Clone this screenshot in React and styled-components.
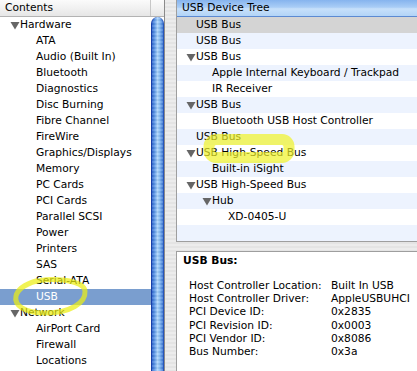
import React from 'react'
import styled, { createGlobalStyle } from 'styled-components'

const ROW_HEIGHT = 16
const FONT = `"DejaVu Sans", "Lucida Grande", Verdana, sans-serif`

const GlobalStyle = createGlobalStyle`
  html, body {
    margin: 0;
    padding: 0;
  }
  body {
    font-family: ${FONT};
    font-size: 10.7px;
    color: #000;
    overflow: hidden;
  }
`

const Window = styled.div`
  position: relative;
  display: flex;
  width: 417px;
  height: 371px;
  overflow: hidden;
  background: repeating-linear-gradient(to bottom, #ececec 0 2px, #e4e4e4 2px 4px);
`

const LeftPane = styled.div`
  display: flex;
  flex-direction: column;
  width: 164px;
  background: #fff;
`

const HeaderBar = styled.div`
  display: flex;
  height: 16px;
  border-bottom: 1px solid #b3b3b3;
  background: linear-gradient(to bottom, #fbfbfb, #f1f1f1 50%, #e6e6e6);
`

const HeaderCell = styled.div`
  width: ${p => p.$width}px;
  padding-left: 5px;
  line-height: 16px;
  border-right: 1px solid #c7c7c7;
  box-sizing: border-box;
`

const Body = styled.div`
  display: flex;
  flex: 1;
  min-height: 0;
`

const List = styled.div`
  width: 151px;
  background: #fff;
  overflow: hidden;
`

const Row = styled.div`
  display: flex;
  align-items: center;
  height: ${ROW_HEIGHT}px;
  padding-left: ${p => p.$indent}px;
  line-height: ${ROW_HEIGHT}px;
  white-space: nowrap;
  background: ${p => p.$bg || 'transparent'};
  color: ${p => (p.$selected ? '#fff' : '#000')};
`

const Toggle = styled.svg`
  width: 10px;
  height: 9px;
  flex: none;
`

const Scrollbar = styled.div`
  width: 13px;
  background: #fff;
  overflow: hidden;
`

const Thumb = styled.div`
  height: 100%;
  border-radius: 7px 7px 0 0;
  box-sizing: border-box;
  border-left: 1px solid #173fa8;
  border-right: 1px solid #2755bb;
  background:
    repeating-linear-gradient(to bottom, rgba(255, 255, 255, 0.12) 0 2px, rgba(0, 0, 0, 0.04) 2px 4px),
    linear-gradient(to right, #2f66cf 0%, #5f9ae8 25%, #acd4fb 50%, #86bbf3 70%, #3f79d6 100%);
`

const Splitter = styled.div`
  width: 12px;
  border-left: 1px solid #8a8a8a;
  box-sizing: border-box;
`

const RightColumn = styled.div`
  display: flex;
  flex-direction: column;
  flex: 1;
  gap: 9px;
`

const TreePane = styled.div`
  display: flex;
  flex-direction: column;
  height: 242px;
  box-sizing: border-box;
  border-left: 1px solid #9e9e9e;
  border-bottom: 1px solid #9e9e9e;
  background: #fff;
  overflow: hidden;
`

const TreeHeader = styled.div`
  height: 16px;
  padding-left: 5px;
  line-height: 16px;
  border-top: 1px solid #3f6fc4;
  border-bottom: 1px solid #5c8ad2;
  margin-top: -1px;
  background: linear-gradient(to bottom, #86b4ee 0%, #a9cdf6 45%, #c7e0fa 55%, #b2d4f7 100%);
`

const InfoPane = styled.div`
  flex: 1;
  border-top: 1px solid #9e9e9e;
  border-left: 1px solid #9e9e9e;
  background: #fff;
  padding: 1px 0 0 6px;
`

const InfoTitle = styled.div`
  font-weight: bold;
  line-height: 15px;
`

const InfoGrid = styled.div`
  display: grid;
  grid-template-columns: 142px auto;
  margin: 11px 0 0 6px;
  line-height: 13.2px;
  white-space: nowrap;
`

const Annotations = styled.svg`
  position: absolute;
  left: 0;
  top: 0;
  width: 417px;
  height: 371px;
  pointer-events: none;
`

const Triangle = () => (
  <Toggle viewBox="0 0 10 9">
    <polygon points="0.5,1 9.5,1 5,8.5" fill="#666" />
  </Toggle>
)

const contents = [
  { text: 'Hardware', level: 0, open: true },
  { text: 'ATA', level: 1 },
  { text: 'Audio (Built In)', level: 1 },
  { text: 'Bluetooth', level: 1 },
  { text: 'Diagnostics', level: 1 },
  { text: 'Disc Burning', level: 1 },
  { text: 'Fibre Channel', level: 1 },
  { text: 'FireWire', level: 1 },
  { text: 'Graphics/Displays', level: 1 },
  { text: 'Memory', level: 1 },
  { text: 'PC Cards', level: 1 },
  { text: 'PCI Cards', level: 1 },
  { text: 'Parallel SCSI', level: 1 },
  { text: 'Power', level: 1 },
  { text: 'Printers', level: 1 },
  { text: 'SAS', level: 1 },
  { text: 'Serial-ATA', level: 1 },
  { text: 'USB', level: 1, selected: true },
  { text: 'Network', level: 0, open: true },
  { text: 'AirPort Card', level: 1 },
  { text: 'Firewall', level: 1 },
  { text: 'Locations', level: 1 },
]

const tree = [
  { text: 'USB Bus', level: 0, selected: true },
  { text: 'USB Bus', level: 0 },
  { text: 'USB Bus', level: 0, open: true },
  { text: 'Apple Internal Keyboard / Trackpad', level: 1 },
  { text: 'IR Receiver', level: 1 },
  { text: 'USB Bus', level: 0, open: true },
  { text: 'Bluetooth USB Host Controller', level: 1 },
  { text: 'USB Bus', level: 0 },
  { text: 'USB High-Speed Bus', level: 0, open: true },
  { text: 'Built-in iSight', level: 1 },
  { text: 'USB High-Speed Bus', level: 0, open: true },
  { text: 'Hub', level: 1, open: true },
  { text: 'XD-0405-U', level: 2 },
  { text: '', level: 0 },
]

const info = [
  ['Host Controller Location:', 'Built In USB'],
  ['Host Controller Driver:', 'AppleUSBUHCI'],
  ['PCI Device ID:', '0x2835'],
  ['PCI Revision ID:', '0x0003'],
  ['PCI Vendor ID:', '0x8086'],
  ['Bus Number:', '0x3a'],
]

// label sits at base + 16 per level; an open item puts its triangle in front of it
const indentFor = (item, base) => base + item.level * 16 - (item.open ? 10 : 0)

const rowBg = (item, i) => {
  if (item.selected) return '#d4d4d4'
  return i % 2 === 1 ? '#edf3fe' : '#fff'
}

export default function App() {
  return (
    <>
      <GlobalStyle />
      <Window>
        <LeftPane>
          <HeaderBar>
            <HeaderCell $width={151}>Contents</HeaderCell>
          </HeaderBar>
          <Body>
            <List>
              {contents.map((item, i) => (
                <Row
                  key={i}
                  $indent={indentFor(item, 20)}
                  $selected={item.selected}
                  $bg={item.selected ? '#7a9ecf' : undefined}
                >
                  {item.open && <Triangle />}
                  {item.text}
                </Row>
              ))}
            </List>
            <Scrollbar>
              <Thumb />
            </Scrollbar>
          </Body>
        </LeftPane>
        <Splitter />
        <RightColumn>
          <TreePane>
            <TreeHeader>USB Device Tree</TreeHeader>
            {tree.map((item, i) => (
              <Row key={i} $indent={indentFor(item, 19)} $bg={rowBg(item, i)}>
                {item.open && <Triangle />}
                {item.text}
              </Row>
            ))}
          </TreePane>
          <InfoPane>
            <InfoTitle>USB Bus:</InfoTitle>
            <InfoGrid>
              {info.map(([label, value]) => (
                <React.Fragment key={label}>
                  <span>{label}</span>
                  <span>{value}</span>
                </React.Fragment>
              ))}
            </InfoGrid>
          </InfoPane>
        </RightColumn>
        <Annotations viewBox="0 0 417 371">
          <path
            d="M30 283 C 50 276, 84 280, 85 291 C 86 303, 70 313, 45 313 C 24 313, 14 305, 16 296 C 18 288, 26 284, 36 281"
            fill="none"
            stroke="rgba(236, 238, 20, 0.72)"
            strokeWidth="5"
            strokeLinecap="round"
          />
          <rect
            x="209"
            y="139.5"
            width="80"
            height="18"
            rx="7"
            fill="none"
            stroke="rgba(240, 242, 40, 0.7)"
            strokeWidth="11"
          />
        </Annotations>
      </Window>
    </>
  )
}
